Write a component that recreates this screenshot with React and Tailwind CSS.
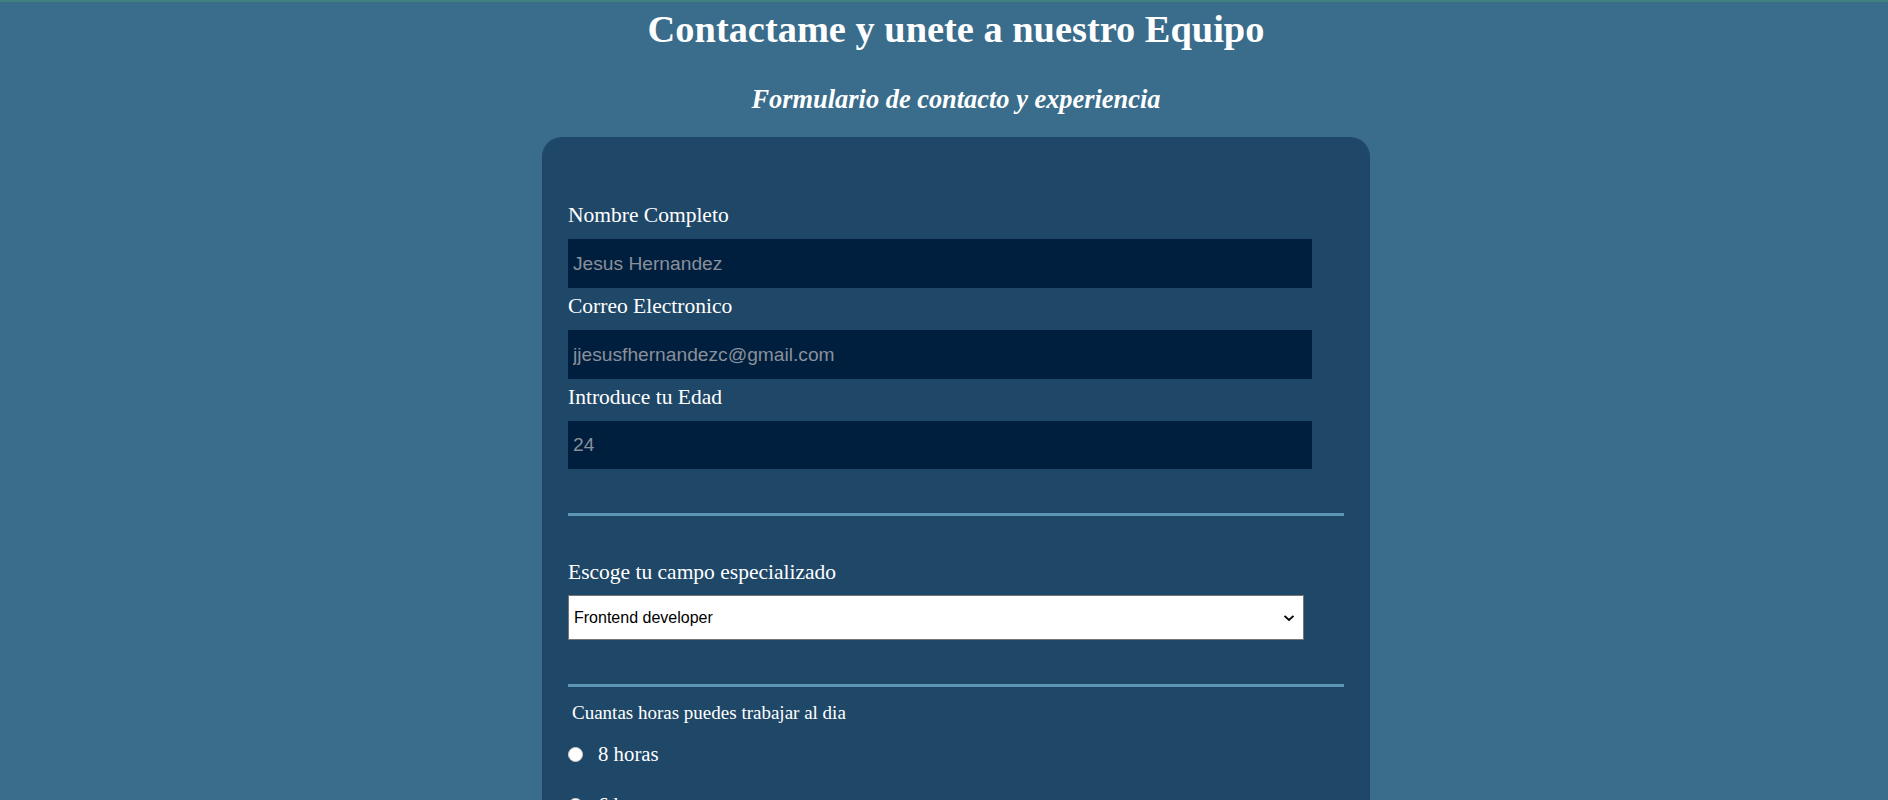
export default function App() {
  const serif = { fontFamily: '"Liberation Serif", "Times New Roman", serif' };
  const sans = { fontFamily: '"Liberation Sans", Arial, sans-serif' };
  return (
    <div className="min-h-[800px] w-full bg-[#3a6c8b] border-t-2 border-[#3f8181]" style={serif}>
      <div className="pl-[24px]">
        <h1 className="text-center text-white font-bold text-[38.4px] leading-[42px] mt-[6px]">
          Contactame y unete a nuestro Equipo
        </h1>
        <h3 className="text-center text-white font-bold italic text-[26.4px] leading-[30px] mt-[34px]">
          Formulario de contacto y experiencia
        </h3>
        <div className="mx-auto mt-[23px] w-[828px] rounded-[20px] bg-[#1f4767] px-[26px] pt-[66px] pb-[40px]">
          <label className="block text-white text-[21.5px] leading-[24px]">Nombre Completo</label>
          <input
            className="mt-[12px] block h-[49px] w-[744px] bg-[#001f3f] pl-[5px] text-[19.2px] text-[#8a9099] placeholder:text-[#8a9099] outline-none"
            style={sans}
            placeholder="Jesus Hernandez"
          />
          <label className="mt-[6px] block text-white text-[21.5px] leading-[24px]">Correo Electronico</label>
          <input
            className="mt-[12px] block h-[49px] w-[744px] bg-[#001f3f] pl-[5px] text-[19.2px] text-[#8a9099] placeholder:text-[#8a9099] outline-none"
            style={sans}
            placeholder="jjesusfhernandezc@gmail.com"
          />
          <label className="mt-[6px] block text-white text-[21.5px] leading-[24px]">Introduce tu Edad</label>
          <input
            className="mt-[12px] block h-[48px] w-[744px] bg-[#001f3f] pl-[5px] text-[19.2px] text-[#8a9099] placeholder:text-[#8a9099] outline-none"
            style={sans}
            placeholder="24"
          />
          <div className="mt-[44px] h-[3px] w-full bg-[#5b96b4]" />
          <label className="mt-[44px] block text-white text-[21.5px] leading-[24px]">Escoge tu campo especializado</label>
          <div
            className="mt-[11px] flex h-[45px] w-[736px] items-center justify-between border border-[#767676] bg-white pl-[5px] pr-[8px] text-[16px] text-black"
            style={sans}
          >
            <span>Frontend developer</span>
            <svg width="12" height="8" viewBox="0 0 12 8" fill="none">
              <path d="M1.5 1.8 L6 6 L10.5 1.8" stroke="#000" strokeWidth="1.8" />
            </svg>
          </div>
          <div className="mt-[44px] h-[3px] w-full bg-[#5b96b4]" />
          <p className="mt-[15px] pl-[4px] text-white text-[19px] leading-[22px]">Cuantas horas puedes trabajar al dia</p>
          <div className="flex flex-col gap-[31px] mt-[20px]">
            {["8 horas", "6 horas", "4 horas"].map((h) => (
              <div key={h} className="flex items-center h-[20px]">
                <span className="inline-block h-[15px] w-[15px] rounded-full border border-[#cfcfcf] bg-white" />
                <span className="ml-[15px] text-white text-[20.8px] leading-[20px]">{h}</span>
              </div>
            ))}
          </div>
        </div>
      </div>
    </div>
  );
}
